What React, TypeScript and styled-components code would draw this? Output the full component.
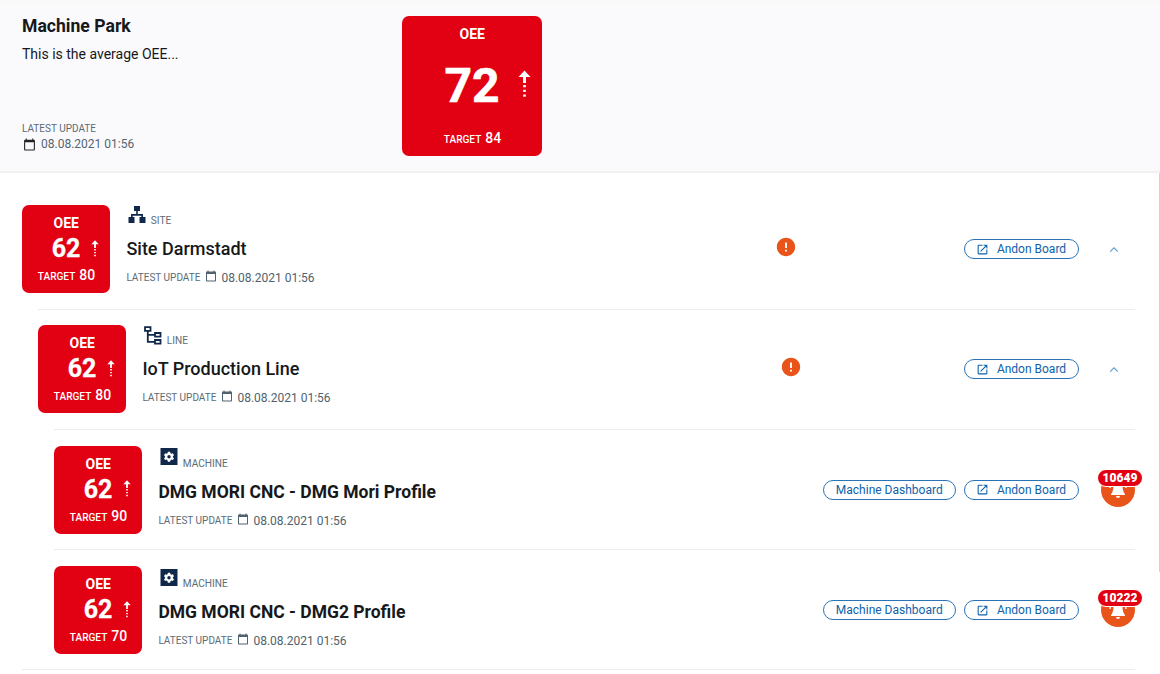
import React from "react";
import styled, { createGlobalStyle } from "styled-components";
import { MdCalendarToday, MdError, MdOpenInNew } from "react-icons/md";

const GlobalStyle = createGlobalStyle`
  * { box-sizing: border-box; }
  body { margin: 0; background: #fff; font-family: Roboto, "Liberation Sans", sans-serif; color: #16181a; overflow: hidden; }
`;

const Page = styled.div`
  height: 674px;
  display: flex;
  flex-direction: column;
`;

const Header = styled.header`
  height: 173px;
  flex: none;
  display: flex;
  padding: 16px 22px 0;
  background: linear-gradient(#f9f9f9 0 5px, #fafafd 5px);
  border-bottom: 2px solid #f0f0f1;
`;

const HeaderText = styled.div`
  width: 380px;
  height: 140px;
  display: flex;
  flex-direction: column;
`;

const ParkTitle = styled.h1`
  margin: 0;
  font-size: 17.6px;
  line-height: 20px;
  font-weight: 700;
`;

const ParkNote = styled.p`
  margin: 8px 0 0;
  font-size: 14px;
  line-height: 20px;
`;

const HeaderUpdate = styled.div`
  margin-top: auto;
  padding-bottom: 4px;
  color: #546570;
`;

const UpdateLabel = styled.span`
  font-size: 10px;
  line-height: 14px;
  color: #5c6c76;
`;

const HeaderDate = styled.div`
  display: flex;
  align-items: center;
  gap: 5px;
  padding-left: 1px;
  font-size: 12px;
  line-height: 16px;
  svg { color: #222; }
`;

const Tile = styled.div<{ $large?: boolean }>`
  width: ${(p) => (p.$large ? 140 : 88)}px;
  height: ${(p) => (p.$large ? 140 : 88)}px;
  flex: none;
  padding: 10px 0 8px;
  display: flex;
  flex-direction: column;
  align-items: center;
  justify-content: space-between;
  background: #e20013;
  border-radius: 7px;
  color: #fff;
`;

const TileName = styled.div`
  padding-left: 0.6px;
  font-size: 14px;
  line-height: 16px;
  font-weight: 700;
`;

const TileValue = styled.div<{ $large?: boolean }>`
  width: 100%;
  display: grid;
  grid-template-columns: 1fr auto 1fr;
  align-items: center;
  font-size: ${(p) => (p.$large ? 48 : 25)}px;
  line-height: ${(p) => (p.$large ? 50 : 26)}px;
  font-weight: 700;
  -webkit-text-stroke: ${(p) => (p.$large ? 0.6 : 0.3)}px #fff;
  svg {
    grid-column: 3;
    justify-self: end;
    margin: ${(p) => (p.$large ? "0 11px 4px 0" : "0 11.500px 2px 0")};
  }
  span { grid-column: 2; }
`;

const TileTarget = styled.div`
  display: flex;
  align-items: baseline;
  gap: 4px;
  padding-left: 1px;
  font-size: 10.1px;
  line-height: 17px;
  font-weight: 500;
  b { font-size: 14px; font-weight: 500; }
`;

const Body = styled.main`
  flex: 1;
  display: flex;
  justify-content: space-between;
`;

const List = styled.div`
  width: 1135px;
  height: 500px;
  padding: 15.4px 0 0 22px;
`;

const ListEnd = styled.div`
  height: 1px;
  margin-top: -0.4px;
  background: #ededee;
`;

const Scrollbar = styled.div`
  width: 1px;
  height: 399px;
  background: #d2d2d4;
`;

const Row = styled.section<{ $level: number }>`
  height: 120.35px;
  margin-left: ${(p) => p.$level * 16}px;
  display: flex;
  align-items: center;
  border-top: 1px solid #ededee;
  &:first-child { border-top-color: transparent; }
`;

const Info = styled.div<{ $machine: boolean }>`
  height: 88px;
  padding-top: ${(p) => (p.$machine ? 2 : 0)}px;
  margin-left: 16.4px;
  flex: 1;
  display: flex;
  flex-direction: column;
`;

const Kind = styled.div`
  height: 22px;
  display: flex;
  align-items: flex-start;
  gap: 4.4px;
  padding-left: 2px;
  font-size: 10.1px;
  color: #5c6c76;
  svg { flex: none; margin-top: 0.5px; }
  span { margin-top: 9px; line-height: 13px; }
`;

const Name = styled.h2<{ $machine: boolean }>`
  margin: 11px 0 0;
  font-size: ${(p) => (p.$machine ? 17.5 : 18)}px;
  line-height: 22px;
  font-weight: ${(p) => (p.$machine ? 700 : 500)};
`;

const Updated = styled.div`
  margin-top: 10px;
  height: 16px;
  display: flex;
  align-items: center;
  color: #4f626d;
  font-size: 12px;
  line-height: 16px;
  svg { margin: -4px 4.5px 0; }
`;

const Alert = styled.div<{ $gap: number }>`
  display: flex;
  margin: -4px ${(p) => p.$gap}px 0 0;
  color: #e9541a;
`;

const Actions = styled.div`
  display: flex;
  gap: 8px;
`;

const Pill = styled.button<{ $wide?: boolean }>`
  width: ${(p) => (p.$wide ? 132.5 : 115.5)}px;
  height: 20px;
  padding: 0;
  display: flex;
  align-items: center;
  justify-content: center;
  gap: 7.5px;
  border: 1px solid #2a73b5;
  border-radius: 10px;
  background: #fff;
  color: #0f62ab;
  font: 400 12px/18px Roboto, "Liberation Sans", sans-serif;
`;

const Trailing = styled.div`
  width: 56px;
  display: flex;
  justify-content: center;
  padding-left: 14px;
`;

const Bell = styled.div`
  position: relative;
  width: 34px;
  height: 34px;
  margin: 0 0 0 8px;
  padding-bottom: 1px;
  border-radius: 50%;
  background: #e9541a;
  display: flex;
  justify-content: center;
  align-items: center;
`;

const Count = styled.span`
  position: absolute;
  top: -4px;
  left: 50%;
  transform: translateX(-50%);
  margin-left: 2px;
  width: 46px;
  height: 18px;
  border: 1px solid #fff;
  border-radius: 9px;
  background: #e20013;
  color: #fff;
  font-size: 12px;
  line-height: 16px;
  font-weight: 900;
  text-align: center;
`;

const DottedArrow = ({ large }: { large?: boolean }) => (
  <svg width={large ? 13 : 8} height={large ? 28 : 17} viewBox="0 0 13 28" fill="#fff">
    <path d="M6.5 0.5 12.5 7H8v6H5V7H.5z" />
    <path d="M5.2 15h2.6v2.3H5.2zM5.2 19.7h2.6V22H5.2zM5.2 24.4h2.6v2.3H5.2z" />
  </svg>
);

const SiteIcon = () => (
  <svg width="18" height="18" viewBox="0 0 18 18" fill="#10294b">
    <path d="M6 0h6v5h-2.2v3H15v3h2.5v6h-6v-6h1.8V9.7H4.7V11h1.8v6h-6v-6H3V8h5.2V5H6z" />
  </svg>
);

const LineIcon = () => (
  <svg width="18" height="19" viewBox="0 0 18 19" fill="none" stroke="#10294b" strokeWidth="1.8">
    <path d="M1 1.2h5.5v3.6H1zM11 7h5.5v3.6H11zM11 14h5.5v3.6H11zM3.8 5v10.8H11M3.8 8.8H11" />
  </svg>
);

const MachineIcon = () => (
  <svg width="18" height="18" viewBox="0 0 18 18">
    <path fill="#10294b" d="M.5 0h17v17H.5z" />
    <path
      fill="#fff"
      d="M7.9 3.8h2.2l.4 1.5 1 .5 1.4-.5L14 7.2l-1.1 1v1l1.1 1-1.1 1.9-1.4-.5-1 .6-.4 1.5H7.9l-.4-1.5-1-.6-1.4.5L4 10.2l1.1-1v-1L4 7.2l1.1-1.9 1.4.5 1-.5z"
    />
    <circle cx="9" cy="8.7" r="1.7" fill="#10294b" />
  </svg>
);

const BellIcon = () => (
  <svg width="20" height="20" viewBox="0 0 20 20" fill="#fff">
    <path d="M10 1c3 .3 4.2 2.5 4.4 5.5.2 4 .9 6.5 2.600 8.700v.8H3v-.8c1.700-2.200 2.400-4.700 2.600-8.700C5.800 3.500 7 1.300 10 1zM8 17h4a2 2 0 0 1-4 0z" />
    <path d="M3.200 5C2.300 6 2 7.500 2 9M16.800 5c.9 1 1.200 2.500 1.200 4" fill="none" stroke="#fff" strokeWidth="1.4" />
  </svg>
);

const Chevron = () => (
  <svg width="10" height="7" viewBox="0 0 10 7" fill="none" stroke="#5da0d0" strokeWidth="1.2">
    <path d="M1.2 5.7 5 1.9l3.8 3.8" />
  </svg>
);

type TileProps = { value: number; target: number; large?: boolean };

const OeeTile = ({ value, target, large }: TileProps) => (
  <Tile $large={large}>
    <TileName>OEE</TileName>
    <TileValue $large={large}>
      <span>{value}</span>
      <DottedArrow large={large} />
    </TileValue>
    <TileTarget>
      TARGET <b>{target}</b>
    </TileTarget>
  </Tile>
);

type Item = {
  kind: "SITE" | "LINE" | "MACHINE";
  name: string;
  level: number;
  target: number;
  alertGap?: number;
  count?: number;
};

const items: Item[] = [
  { kind: "SITE", name: "Site Darmstadt", level: 0, target: 80, alertGap: 167 },
  { kind: "LINE", name: "IoT Production Line", level: 1, target: 80, alertGap: 161.5 },
  { kind: "MACHINE", name: "DMG MORI CNC - DMG Mori Profile", level: 2, target: 90, count: 10649 },
  { kind: "MACHINE", name: "DMG MORI CNC - DMG2 Profile", level: 2, target: 70, count: 10222 },
];

const icons = { SITE: SiteIcon, LINE: LineIcon, MACHINE: MachineIcon };

const AssetRow = ({ item }: { item: Item }) => {
  const Icon = icons[item.kind];
  const machine = item.kind === "MACHINE";
  return (
    <Row $level={item.level}>
      <OeeTile value={62} target={item.target} />
      <Info $machine={machine}>
        <Kind>
          <Icon />
          <span>{item.kind}</span>
        </Kind>
        <Name $machine={machine}>{item.name}</Name>
        <Updated>
          <UpdateLabel>LATEST UPDATE</UpdateLabel>
          <MdCalendarToday size={12} />
          08.08.2021 01:56
        </Updated>
      </Info>
      {item.alertGap && (
        <Alert $gap={item.alertGap}>
          <MdError size={22} />
        </Alert>
      )}
      <Actions>
        {machine && <Pill $wide>Machine Dashboard</Pill>}
        <Pill>
          <MdOpenInNew size={13} />
          Andon Board
        </Pill>
      </Actions>
      <Trailing>
        {item.count ? (
          <Bell>
            <BellIcon />
            <Count>{item.count}</Count>
          </Bell>
        ) : (
          <Chevron />
        )}
      </Trailing>
    </Row>
  );
};

export default function App() {
  return (
    <Page>
      <GlobalStyle />
      <Header>
        <HeaderText>
          <ParkTitle>Machine Park</ParkTitle>
          <ParkNote>This is the average OEE...</ParkNote>
          <HeaderUpdate>
            <UpdateLabel>LATEST UPDATE</UpdateLabel>
            <HeaderDate>
              <MdCalendarToday size={13} />
              08.08.2021 01:56
            </HeaderDate>
          </HeaderUpdate>
        </HeaderText>
        <OeeTile value={72} target={84} large />
      </Header>
      <Body>
        <List>
          {items.map((item) => (
            <AssetRow key={item.name} item={item} />
          ))}
          <ListEnd />
        </List>
        <Scrollbar />
      </Body>
    </Page>
  );
}
